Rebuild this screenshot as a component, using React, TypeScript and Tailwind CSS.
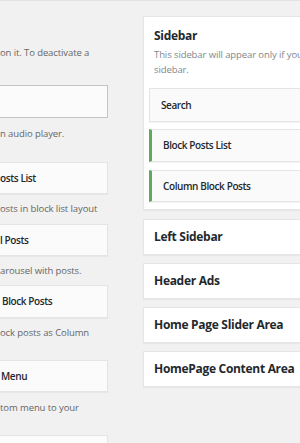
const font = { fontFamily: '"Open Sans", "Noto Sans", sans-serif' };

const LeftWidget = ({ title, className }: { title: string; className: string }) => (
    <div className={`h-[32px] shrink-0 bg-[#fbfbfb] border border-[#e5e5e5] shadow-[0_1px_1px_rgba(0,0,0,0.04)] flex items-center text-[10px] font-semibold text-[#23282d] tracking-[-0.4px] whitespace-nowrap ${className}`}>
        {title}
    </div>
);

const LeftDesc = ({ text, className }: { text: string; className: string }) => (
    <p className={`leading-[16px] text-[9.5px] text-[#666] tracking-[-0.1px] whitespace-nowrap ${className}`}>{text}</p>
);

const SidebarWidget = ({ title, active, className }: { title: string; active?: boolean; className: string }) => (
    <div
        className={`bg-[#fafafa] border border-[#e5e5e5] shadow-[0_1px_1px_rgba(0,0,0,0.04)] flex items-center pl-[11px] text-[10px] font-semibold text-[#23282d] tracking-[-0.4px] whitespace-nowrap ${active ? 'border-l-[3px] border-l-[#5fa95f]' : ''} ${className}`}
    >
        {title}
    </div>
);

const CollapsedSidebar = ({ title }: { title: string }) => (
    <div className="mt-[8px] h-[36px] w-[200px] shrink-0 bg-white border border-[#e5e5e5] shadow-[0_1px_1px_rgba(0,0,0,0.04)] flex items-center pl-[10px] text-[12px] font-bold text-[#23282d] tracking-[-0.3px] whitespace-nowrap">
        {title}
    </div>
);

export default function App() {
    return (
        <div style={font} className="w-[300px] h-[443px] overflow-hidden bg-[#f1f1f1] border-t border-[#e3e3e3] flex">
            {/* available widgets, cut off at the left */}
            <div className="w-[108px] shrink-0 flex flex-col">
                <LeftDesc text="on it. To deactivate a" className="mt-[44px] text-[#555]" />
                <div className="mt-[24px] h-[33px] shrink-0 bg-[#fbfbfb] border border-[#c4c4c4] border-l-0" />
                <LeftDesc text="n audio player." className="mt-[8px]" />
                <LeftWidget title="osts List" className="mt-[20px] border-l-0" />
                <LeftDesc text="osts in block list layout" className="mt-[7px]" />
                <LeftWidget title="l Posts" className="mt-[7px] border-l-0" />
                <LeftDesc text="arousel with posts." className="mt-[7px]" />
                <LeftWidget title="Block Posts" className="mt-[6px] h-[33px] pl-[2px] border-l-0" />
                <LeftDesc text="ock posts as Column" className="mt-[7px]" />
                <LeftWidget title="Menu" className="mt-[19px] pl-[1px] border-l-0" />
                <LeftDesc text="tom menu to your" className="mt-[8px]" />
                <LeftWidget title="" className="mt-[19px] border-l-0" />
            </div>

            {/* registered sidebars */}
            <div className="ml-[35px] mt-[15px] flex flex-col">
                <div className="w-[200px] shrink-0 bg-white border border-[#e5e5e5] shadow-[0_1px_1px_rgba(0,0,0,0.04)] pl-[5px] pt-[10px] pb-[7px]">
                    <h3 className="pl-[5px] leading-[18px] text-[12px] font-bold text-[#23282d] tracking-[-0.3px]">Sidebar</h3>
                    <div className="pl-[5px] mt-[2px] leading-[15px] text-[9.5px] text-[#82878c] tracking-[-0.1px] whitespace-nowrap">
                        <p>This sidebar will appear only if you choose a</p>
                        <p>sidebar.</p>
                    </div>
                    <SidebarWidget title="Search" className="mt-[11px] h-[34px]" />
                    <SidebarWidget title="Block Posts List" active className="mt-[7px] h-[33px]" />
                    <SidebarWidget title="Column Block Posts" active className="mt-[8px] h-[32px]" />
                </div>
                <div className="h-[1px]" />
                <CollapsedSidebar title="Left Sidebar" />
                <CollapsedSidebar title="Header Ads" />
                <CollapsedSidebar title="Home Page Slider Area" />
                <CollapsedSidebar title="HomePage Content Area" />
            </div>
        </div>
    );
}
